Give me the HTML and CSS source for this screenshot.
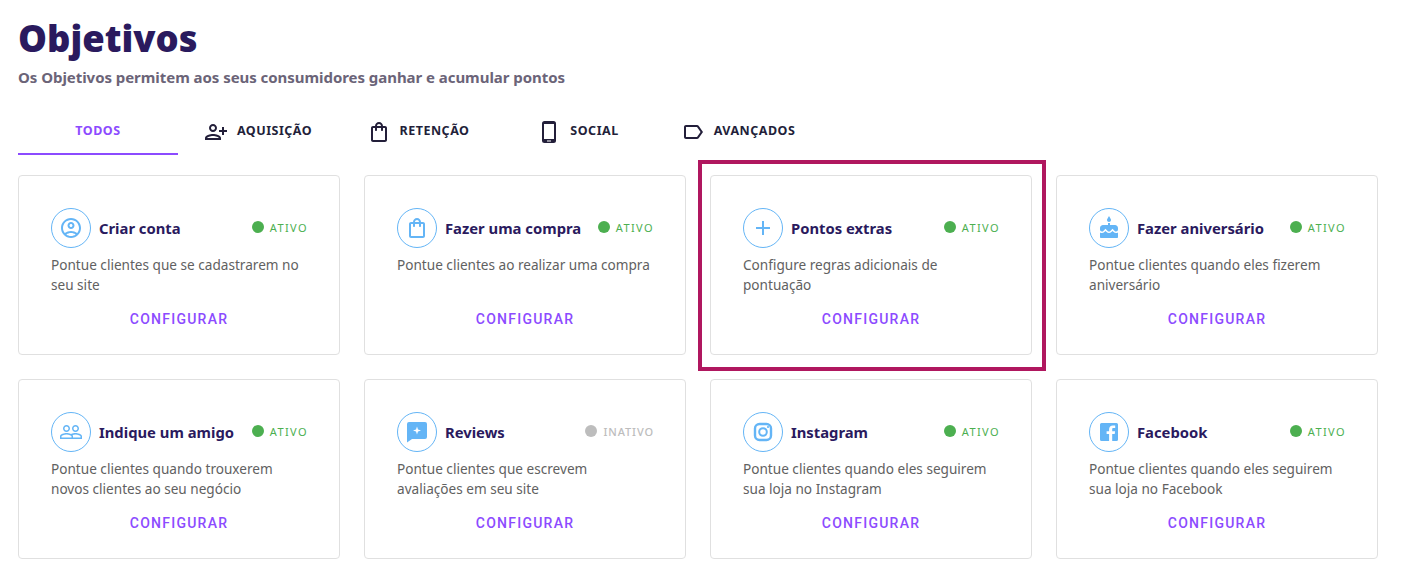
FILE: index.html
```html
<!DOCTYPE html>
<html lang="pt-BR">
<head>
  <meta charset="UTF-8">
  <title>Objetivos</title>
  <link rel="stylesheet" href="styles.css">
</head>
<body>
  <h1>Objetivos</h1>
  <p class="subtitle">Os Objetivos permitem aos seus consumidores ganhar e acumular pontos</p>

  <div class="tabs">
    <div class="tab active">TODOS</div>
    <div class="tab">
      <svg width="24" height="24" viewBox="0 0 24 24" fill="#231f3a"><path transform="matrix(-1 0 0 1 24 0)" d="M15 12c2.21 0 4-1.79 4-4s-1.79-4-4-4-4 1.79-4 4 1.79 4 4 4zm0-6c1.1 0 2 .9 2 2s-.9 2-2 2-2-.9-2-2 .9-2 2-2zm0 8c-2.67 0-8 1.34-8 4v2h16v-2c0-2.66-5.33-4-8-4zm-6 4c.22-.72 3.31-2 6-2 2.7 0 5.8 1.29 6 2H9zm-3-3v-3h3v-2H6V7H4v3H1v2h3v3h2z"/></svg>
      AQUISIÇÃO
    </div>
    <div class="tab">
      <svg width="24" height="24" viewBox="0 0 24 24" fill="#231f3a"><path d="M18 6h-2c0-2.21-1.79-4-4-4S8 3.79 8 6H6c-1.1 0-2 .9-2 2v12c0 1.1.9 2 2 2h12c1.1 0 2-.9 2-2V8c0-1.1-.9-2-2-2zm-6-2c1.1 0 2 .9 2 2h-4c0-1.1.9-2 2-2zm6 16H6V8h2v2c0 .55.45 1 1 1s1-.45 1-1V8h4v2c0 .55.45 1 1 1s1-.45 1-1V8h2v12z"/></svg>
      RETENÇÃO
    </div>
    <div class="tab">
      <svg width="24" height="24" viewBox="0 0 24 24"><rect x="5" y="1" width="14" height="22" rx="2.5" fill="#231f3a"/><rect x="7" y="4" width="10" height="15" fill="#fff"/><rect x="10" y="20.5" width="4" height="1" fill="#fff"/></svg>
      SOCIAL
    </div>
    <div class="tab">
      <svg width="24" height="24" viewBox="0 0 24 24" fill="#231f3a"><path d="M17.63 5.84C17.27 5.33 16.67 5 16 5L5 5.01C3.9 5.01 3 5.9 3 7v10c0 1.1.9 1.99 2 1.99L16 19c.67 0 1.27-.33 1.63-.84L22 12l-4.37-6.16zM16 17H5V7h11l3.55 5L16 17z"/></svg>
      AVANÇADOS
    </div>
  </div>

  <div class="grid">
    <div class="card">
      <div class="card-top">
        <div class="icon">
          <svg width="24" height="24" viewBox="0 0 24 24" fill="#64b5f6"><path d="M12 2C6.48 2 2 6.48 2 12s4.48 10 10 10 10-4.48 10-10S17.52 2 12 2zM7.35 18.5C8.66 17.56 10.26 17 12 17s3.34.56 4.65 1.5c-1.31.94-2.91 1.5-4.65 1.5s-3.34-.56-4.65-1.5zm10.79-1.38C16.45 15.8 14.32 15 12 15s-4.45.8-6.14 2.12C4.7 15.73 4 13.95 4 12c0-4.42 3.58-8 8-8s8 3.58 8 8c0 1.95-.7 3.73-1.86 5.12z"/><path d="M12 6c-1.93 0-3.5 1.57-3.5 3.5S10.07 13 12 13s3.5-1.57 3.5-3.5S13.93 6 12 6zm0 5c-.83 0-1.5-.67-1.5-1.5S11.17 8 12 8s1.5.67 1.5 1.5S12.83 11 12 11z"/></svg>
        </div>
        <span class="card-title">Criar conta</span>
        <span class="status"><i class="dot"></i>ATIVO</span>
      </div>
      <p class="desc">Pontue clientes que se cadastrarem no seu site</p>
      <div class="action">CONFIGURAR</div>
    </div>

    <div class="card">
      <div class="card-top">
        <div class="icon">
          <svg width="24" height="24" viewBox="0 0 24 24" fill="#64b5f6"><path d="M18 6h-2c0-2.21-1.79-4-4-4S8 3.79 8 6H6c-1.1 0-2 .9-2 2v12c0 1.1.9 2 2 2h12c1.1 0 2-.9 2-2V8c0-1.1-.9-2-2-2zm-6-2c1.1 0 2 .9 2 2h-4c0-1.1.9-2 2-2zm6 16H6V8h2v2c0 .55.45 1 1 1s1-.45 1-1V8h4v2c0 .55.45 1 1 1s1-.45 1-1V8h2v12z"/></svg>
        </div>
        <span class="card-title">Fazer uma compra</span>
        <span class="status"><i class="dot"></i>ATIVO</span>
      </div>
      <p class="desc">Pontue clientes ao realizar uma compra</p>
      <div class="action">CONFIGURAR</div>
    </div>

    <div class="card">
      <div class="card-top">
        <div class="icon">
          <svg width="24" height="24" viewBox="0 0 24 24" fill="none" stroke="#64b5f6" stroke-width="2"><path d="M12 5v14M5 12h14"/></svg>
        </div>
        <span class="card-title">Pontos extras</span>
        <span class="status"><i class="dot"></i>ATIVO</span>
      </div>
      <p class="desc">Configure regras adicionais de pontuação</p>
      <div class="action">CONFIGURAR</div>
    </div>

    <div class="card">
      <div class="card-top">
        <div class="icon">
          <svg width="24" height="24" viewBox="0 0 24 24" fill="#64b5f6"><path d="M12 6c1.11 0 2-.9 2-2 0-.38-.1-.73-.29-1.03L12 0l-1.71 2.97c-.19.3-.29.65-.29 1.03 0 1.1.9 2 2 2zm4.6 9.99l-1.07-1.07-1.08 1.07c-1.3 1.3-3.58 1.31-4.89 0l-1.07-1.07-1.09 1.07C6.75 16.64 5.88 17 4.96 17c-.73 0-1.4-.23-1.96-.61V21c0 .55.45 1 1 1h16c.55 0 1-.45 1-1v-4.61c-.56.38-1.23.61-1.96.61-.92 0-1.79-.36-2.44-1.01zM18 9h-5V7h-2v2H6c-1.66 0-3 1.34-3 3v1.54c0 1.08.88 1.96 1.96 1.96.52 0 1.02-.2 1.38-.57l2.14-2.13 2.13 2.13c.74.74 2.03.74 2.77 0l2.14-2.13 2.13 2.13c.37.37.86.57 1.38.57 1.08 0 1.96-.88 1.96-1.96V12C21 10.34 19.66 9 18 9z"/></svg>
        </div>
        <span class="card-title">Fazer aniversário</span>
        <span class="status"><i class="dot"></i>ATIVO</span>
      </div>
      <p class="desc">Pontue clientes quando eles fizerem aniversário</p>
      <div class="action">CONFIGURAR</div>
    </div>

    <div class="card">
      <div class="card-top">
        <div class="icon">
          <svg width="24" height="24" viewBox="0 0 24 24" fill="#64b5f6"><path d="M16.5 13c-1.2 0-3.07.34-4.5 1-1.43-.67-3.3-1-4.5-1C5.33 13 1 14.08 1 16.25V19h22v-2.75c0-2.17-4.33-3.25-6.5-3.25zm-4 4.5h-10v-1.25c0-.54 2.56-1.75 5-1.75s5 1.21 5 1.75v1.25zm9 0H14v-1.25c0-.46-.2-.86-.52-1.22.88-.3 1.96-.53 3.02-.53 2.44 0 5 1.21 5 1.75v1.25zM7.5 12c1.93 0 3.5-1.57 3.5-3.5S9.43 5 7.5 5 4 6.57 4 8.5 5.57 12 7.5 12zm0-5.5c1.1 0 2 .9 2 2s-.9 2-2 2-2-.9-2-2 .9-2 2-2zm9 5.5c1.93 0 3.5-1.57 3.5-3.5S18.43 5 16.5 5 13 6.57 13 8.5s1.57 3.5 3.5 3.5zm0-5.5c1.1 0 2 .9 2 2s-.9 2-2 2-2-.9-2-2 .9-2 2-2z"/></svg>
        </div>
        <span class="card-title">Indique um amigo</span>
        <span class="status"><i class="dot"></i>ATIVO</span>
      </div>
      <p class="desc">Pontue clientes quando trouxerem novos clientes ao seu negócio</p>
      <div class="action">CONFIGURAR</div>
    </div>

    <div class="card">
      <div class="card-top">
        <div class="icon">
          <svg width="24" height="24" viewBox="0 0 24 24"><path fill="#64b5f6" d="M4 2h16a2 2 0 0 1 2 2v13a2 2 0 0 1-2 2H7l-5 3.5V4a2 2 0 0 1 2-2z"/><path fill="#fff" d="M12 6.5l1 3 3 1-3 1-1 3-1-3-3-1 3-1z"/></svg>
        </div>
        <span class="card-title">Reviews</span>
        <span class="status off"><i class="dot"></i>INATIVO</span>
      </div>
      <p class="desc">Pontue clientes que escrevem avaliações em seu site</p>
      <div class="action">CONFIGURAR</div>
    </div>

    <div class="card">
      <div class="card-top">
        <div class="icon">
          <svg width="24" height="24" viewBox="0 0 24 24" fill="none" stroke="#64b5f6" stroke-width="2.4"><rect x="4" y="4" width="16" height="16" rx="4.5"/><circle cx="12" cy="12" r="3.8" stroke-width="2"/><circle cx="17" cy="7" r="1.1" fill="#64b5f6" stroke="none"/></svg>
        </div>
        <span class="card-title">Instagram</span>
        <span class="status"><i class="dot"></i>ATIVO</span>
      </div>
      <p class="desc">Pontue clientes quando eles seguirem sua loja no Instagram</p>
      <div class="action">CONFIGURAR</div>
    </div>

    <div class="card">
      <div class="card-top">
        <div class="icon">
          <svg width="24" height="24" viewBox="0 0 24 24"><path fill="#64b5f6" d="M4.5 3h15A1.5 1.5 0 0 1 21 4.5v15a1.5 1.5 0 0 1-1.5 1.5h-4.3v-7h2.5l.4-2.8h-2.9V9.4c0-.9.3-1.4 1.4-1.4h1.6V5.500c-.3 0-1.2-.1-2.3-.1-2.3 0-3.800 1.400-3.800 3.900v2H9.600V14h2.500v7H4.500A1.500 1.500 0 0 1 3 19.500v-15A1.500 1.500 0 0 1 4.500 3z"/></svg>
        </div>
        <span class="card-title">Facebook</span>
        <span class="status"><i class="dot"></i>ATIVO</span>
      </div>
      <p class="desc">Pontue clientes quando eles seguirem sua loja no Facebook</p>
      <div class="action">CONFIGURAR</div>
    </div>

    <div class="highlight"></div>
  </div>
</body>
</html>
```

FILE: styles.css
```css
* {
  box-sizing: border-box;
}

body {
  margin: 0;
  padding: 16px 29px 0 18px;
  background: #fff;
  font-family: "Noto Sans", sans-serif;
  color: #2a1a5e;
  overflow: hidden;
}

h1 {
  margin: 0;
  font-size: 36.4px;
  line-height: 44px;
  font-weight: 900;
  color: #2a1a5e;
}

.subtitle {
  margin: 7px 0 0;
  font-size: 15px;
  line-height: 20px;
  font-weight: 700;
  letter-spacing: -0.05px;
  color: #6b6478;
}

.tabs {
  display: flex;
  margin-top: 20px;
}

.tab {
  width: 160px;
  height: 48px;
  display: flex;
  align-items: center;
  justify-content: center;
  gap: 9px;
  font-size: 12.5px;
  font-weight: 700;
  letter-spacing: 0.5px;
  line-height: 46px;
  color: #231f3a;
}

.tab svg {
  margin-top: 1px;
}

.tab.active {
  padding-top: 2px;
  color: #8c4bff;
  border-bottom: 2px solid #8c4bff;
}

.grid {
  position: relative;
  display: grid;
  grid-template-columns: repeat(4, 322px);
  grid-auto-rows: 180px;
  gap: 24px;
  margin-top: 20px;
}

.card {
  padding: 32px 32px 0;
  border: 1px solid #e0e0e0;
  border-radius: 4px;
}

.card-top {
  display: flex;
  align-items: center;
  height: 40px;
}

.icon {
  width: 40px;
  height: 40px;
  flex: none;
  display: flex;
  align-items: center;
  justify-content: center;
  border: 1px solid #64b5f6;
  border-radius: 50%;
}

.card-title {
  margin-left: 8px;
  font-size: 14.8px;
  font-weight: 700;
  color: #2a1a5e;
}

.status {
  margin: -2px -1px 0 auto;
  display: flex;
  align-items: center;
  gap: 6px;
  font-size: 11px;
  letter-spacing: 1.4px;
  color: #4caf50;
}

.dot {
  width: 12px;
  height: 12px;
  border-radius: 50%;
  background: #4caf50;
}

.status.off {
  color: #bdbdbd;
  font-weight: 500;
  letter-spacing: 0.9px;
}

.status.off .dot {
  background: #bdbdbd;
}

.desc {
  margin: 7px 0 0;
  font-size: 13.6px;
  line-height: 20px;
  color: #616161;
  min-height: 40px;
}

.action {
  margin-top: 16px;
  font-family: Roboto, sans-serif;
  font-size: 14px;
  font-weight: 500;
  line-height: 17px;
  letter-spacing: 1.25px;
  text-align: center;
  color: #8c4bff;
}

.highlight {
  position: absolute;
  left: 680px;
  top: -15px;
  width: 348px;
  height: 211px;
  border: 4px solid #b0175f;
  pointer-events: none;
}
```
